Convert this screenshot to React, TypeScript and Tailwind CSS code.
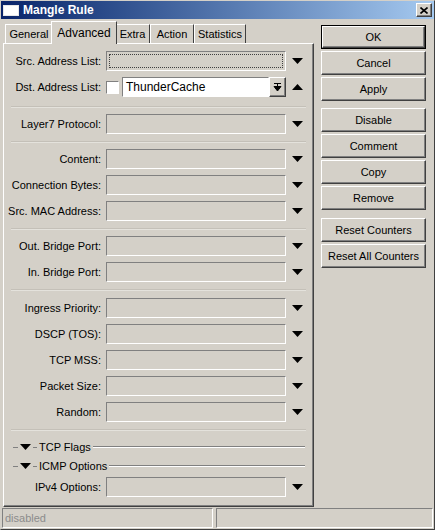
import type { ReactNode } from 'react';

const font = { fontFamily: '"Liberation Sans", Arial, sans-serif' };

// classic 3D edges
const sunken = 'border border-t-[#808080] border-l-[#808080] border-b-white border-r-white';
const raised = 'border border-t-white border-l-white border-b-[#404040] border-r-[#404040] shadow-[inset_-1px_-1px_0_#808080]';

function DownArrow() {
  return (
    <svg width="11" height="6" viewBox="0 0 11 6" className="block">
      <path d="M0 0h11L5.5 6z" fill="#000" />
    </svg>
  );
}

function UpArrow() {
  return (
    <svg width="11" height="6" viewBox="0 0 11 6" className="block">
      <path d="M0 6h11L5.5 0z" fill="#000" />
    </svg>
  );
}

function Field({ label, focused }: { label: string; focused?: boolean }) {
  return (
    <div className="flex h-[20px] items-center">
      <span className="w-[99px] shrink-0 pr-[2px] text-right">{label}</span>
      <div className={`ml-[3px] h-[20px] w-[180px] ${sunken} p-[2px]`}>
        {focused ? <div className="h-full w-full border border-dotted border-[#404040]" /> : null}
      </div>
      <div className="flex w-[20px] justify-center pl-[2px]">
        <DownArrow />
      </div>
    </div>
  );
}

function Separator({ className = '' }: { className?: string }) {
  return <div className={`mx-[7px] h-[2px] border-t border-t-[#c4c0b8] border-b border-b-[#e4e2dc] ${className}`} />;
}

function Section({ title, className = '' }: { title: string; className?: string }) {
  return (
    <div className={`flex h-[14px] items-center ${className}`}>
      <div className="ml-[9px] h-px w-[5px] bg-[#808080]" />
      <div className="mx-[2px]"><DownArrow /></div>
      <div className="h-px w-[4px] bg-[#808080]" />
      <span className="px-[2px]">{title}</span>
      <div className="mr-[8px] h-[2px] flex-1 border-t border-t-[#808080] border-b border-b-white" />
    </div>
  );
}

function Button({ children, primary, className = '' }: { children: ReactNode; primary?: boolean; className?: string }) {
  return (
    <div className={`h-[24px] w-[105px] ${primary ? 'border border-black' : ''} ${className}`}>
      <div className={`flex h-full w-full items-center justify-center ${raised}`}>{children}</div>
    </div>
  );
}

function Tab({ label, active, width }: { label: string; active?: boolean; width: string }) {
  if (active) {
    return (
      <div className={`relative z-10 -mb-px -mx-[2px] flex h-[23px] items-start justify-center border border-b-0 border-t-white border-l-white border-r-[#404040] bg-[#d4d0c8] pt-[2px] text-[12px] ${width}`}>
        {label}
      </div>
    );
  }
  return (
    <div className={`mt-[3px] flex h-[19px] items-center justify-center border border-b-0 border-t-white border-l-white border-r-[#404040] ${width}`}>
      {label}
    </div>
  );
}

export default function App() {
  return (
    <div className="flex h-[530px] w-[435px] flex-col border border-l-[#d4d0c8] border-t-[#d4d0c8] border-r-[#404040] border-b-[#404040] bg-[#d4d0c8] text-[11px] text-black" style={font}>
      {/* title bar */}
      <div className="flex h-[18px] items-center bg-gradient-to-r from-[#0a246a] to-[#a6caf0] pl-[2px] pr-[2px]">
        <div className="h-[11px] w-[16px] border border-[#e8e8e8] bg-white" />
        <span className="ml-[4px] text-[12px] font-bold text-white">Mangle Rule</span>
        <div className={`ml-auto flex h-[14px] w-[16px] items-center justify-center bg-[#d4d0c8] ${raised}`}>
          <svg width="8" height="7" viewBox="0 0 8 7">
            <path d="M0.5 0.5l7 6M7.5 0.5l-7 6" stroke="#000" strokeWidth="1.6" />
          </svg>
        </div>
      </div>

      <div className="flex flex-1 pl-[2px] pt-[2px]">
        {/* tabbed panel */}
        <div className="flex w-[311px] flex-col">
          <div className="flex h-[22px] items-end pl-[2px]">
            <Tab label="General" width="w-[48px]" />
            <Tab label="Advanced" active width="w-[66px]" />
            <Tab label="Extra" width="w-[35px]" />
            <Tab label="Action" width="w-[44px]" />
            <Tab label="Statistics" width="w-[52px]" />
          </div>
          <div className="flex h-[464px] flex-col border border-t-white border-l-white border-r-[#404040] border-b-[#404040] shadow-[inset_-1px_-1px_0_#808080] pt-[7px]">
            <div className="flex flex-col gap-[6px]">
              <Field label="Src. Address List:" focused />
              <div className="flex h-[20px] items-center">
                <span className="w-[99px] shrink-0 pr-[2px] text-right">Dst. Address List:</span>
                <div className={`ml-[3px] h-[13px] w-[13px] bg-white ${sunken}`} />
                <div className={`ml-[3px] flex h-[20px] w-[147px] items-center bg-white pl-[3px] text-[12px] ${sunken}`}>ThunderCache</div>
                <div className={`flex h-[20px] w-[17px] items-center justify-center bg-[#d4d0c8] ${raised}`}>
                  <svg width="9" height="9" viewBox="0 0 9 9">
                    <path d="M1 0.5h7M4.5 0.5v3M1 3.5h7L4.5 8z" stroke="#000" fill="#000" strokeWidth="1" />
                  </svg>
                </div>
                <div className="flex w-[20px] justify-center pl-[2px]">
                  <UpArrow />
                </div>
              </div>
            </div>
            <Separator className="mt-[9px] mb-[6px]" />
            <Field label="Layer7 Protocol:" />
            <Separator className="mt-[7px] mb-[6px]" />
            <div className="flex flex-col gap-[6px]">
              <Field label="Content:" />
              <Field label="Connection Bytes:" />
              <Field label="Src. MAC Address:" />
            </div>
            <Separator className="mt-[7px] mb-[6px]" />
            <div className="flex flex-col gap-[6px]">
              <Field label="Out. Bridge Port:" />
              <Field label="In. Bridge Port:" />
            </div>
            <Separator className="mt-[7px] mb-[7px]" />
            <div className="flex flex-col gap-[6px]">
              <Field label="Ingress Priority:" />
              <Field label="DSCP (TOS):" />
              <Field label="TCP MSS:" />
              <Field label="Packet Size:" />
              <Field label="Random:" />
            </div>
            <Separator className="mt-[7px]" />
            <Section title="TCP Flags" className="mt-[9px]" />
            <Section title="ICMP Options" className="mt-[5px]" />
            <div className="mt-[4px] flex h-[20px] items-center">
              <span className="w-[99px] shrink-0 pr-[2px] text-right">IPv4 Options:</span>
              <div className={`ml-[3px] h-[20px] w-[180px] ${sunken}`} />
              <div className="flex w-[20px] justify-center pl-[2px]">
                <DownArrow />
              </div>
            </div>
          </div>
        </div>

        {/* action buttons */}
        <div className="ml-[7px] flex flex-col pt-[4px]">
          <Button primary>OK</Button>
          <Button className="mt-[2px]">Cancel</Button>
          <Button className="mt-[2px]">Apply</Button>
          <Button className="mt-[7px]">Disable</Button>
          <Button className="mt-[2px]">Comment</Button>
          <Button className="mt-[2px]">Copy</Button>
          <Button className="mt-[2px]">Remove</Button>
          <Button className="mt-[8px]">Reset Counters</Button>
          <Button className="mt-[2px]">Reset All Counters</Button>
        </div>
      </div>

      {/* status bar */}
      <div className="flex h-[21px] gap-[3px] px-[1px] pb-[1px]">
        <div className={`flex w-[211px] items-center pl-[2px] text-[#8c8c8c] ${sunken}`}>disabled</div>
        <div className={`flex-1 ${sunken}`} />
      </div>
    </div>
  );
}
